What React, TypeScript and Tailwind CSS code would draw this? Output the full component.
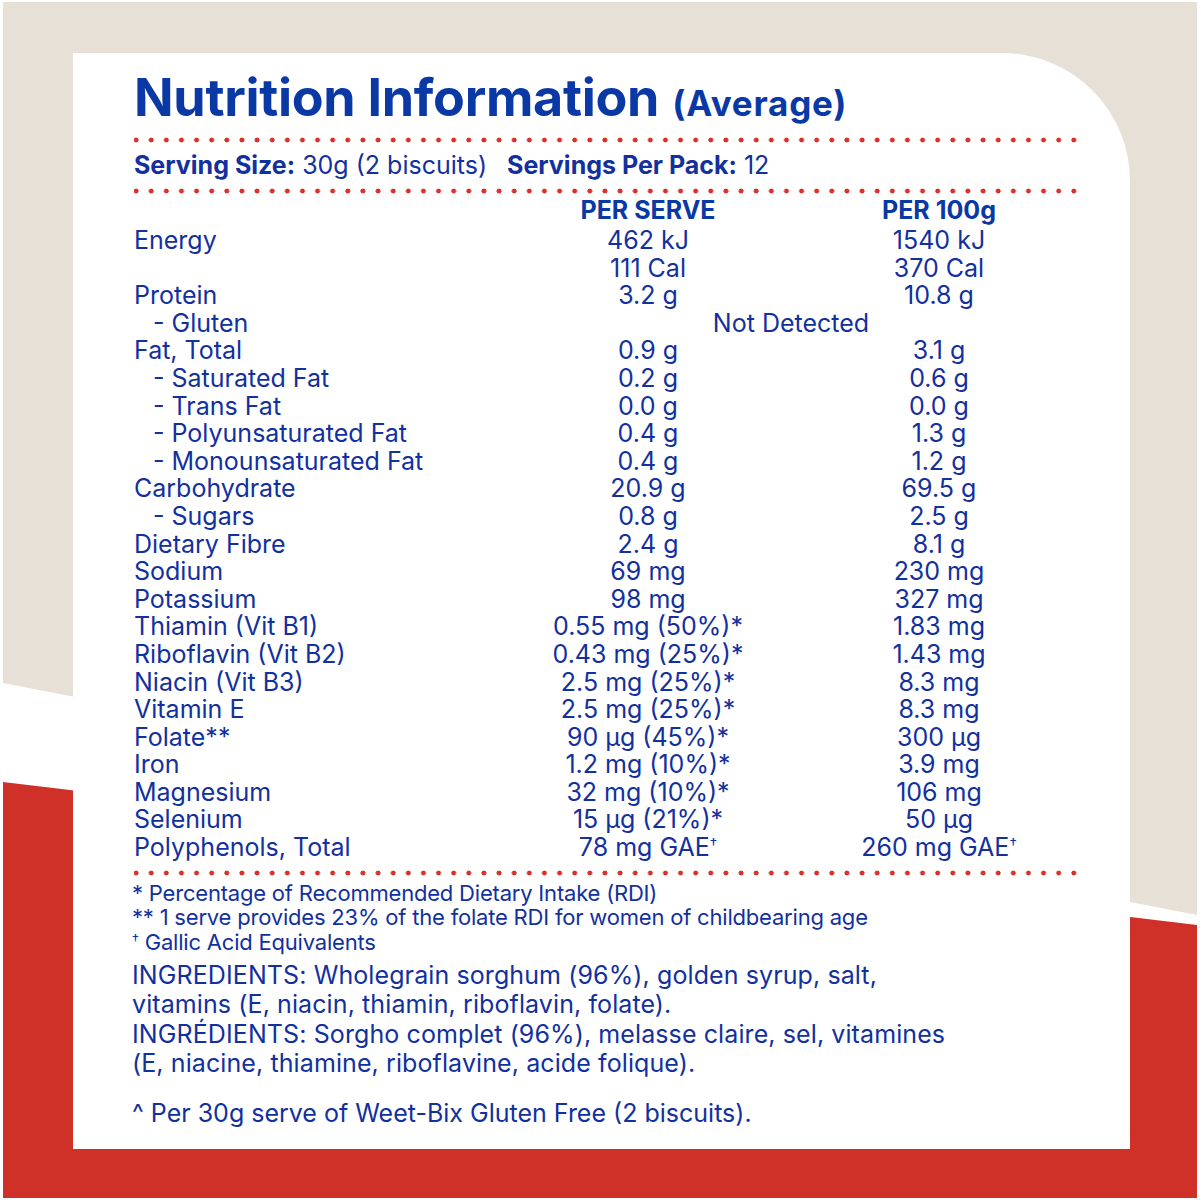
import React from "react";

type Row = { label: string; serve?: string; per100?: string; indent?: boolean; span?: string };

const rows: Row[] = [
  { label: "Energy", serve: "462 kJ", per100: "1540 kJ" },
  { label: "", serve: "111 Cal", per100: "370 Cal" },
  { label: "Protein", serve: "3.2 g", per100: "10.8 g" },
  { label: "- Gluten", indent: true, span: "Not Detected" },
  { label: "Fat, Total", serve: "0.9 g", per100: "3.1 g" },
  { label: "- Saturated Fat", indent: true, serve: "0.2 g", per100: "0.6 g" },
  { label: "- Trans Fat", indent: true, serve: "0.0 g", per100: "0.0 g" },
  { label: "- Polyunsaturated Fat", indent: true, serve: "0.4 g", per100: "1.3 g" },
  { label: "- Monounsaturated Fat", indent: true, serve: "0.4 g", per100: "1.2 g" },
  { label: "Carbohydrate", serve: "20.9 g", per100: "69.5 g" },
  { label: "- Sugars", indent: true, serve: "0.8 g", per100: "2.5 g" },
  { label: "Dietary Fibre", serve: "2.4 g", per100: "8.1 g" },
  { label: "Sodium", serve: "69 mg", per100: "230 mg" },
  { label: "Potassium", serve: "98 mg", per100: "327 mg" },
  { label: "Thiamin (Vit B1)", serve: "0.55 mg (50%)*", per100: "1.83 mg" },
  { label: "Riboflavin (Vit B2)", serve: "0.43 mg (25%)*", per100: "1.43 mg" },
  { label: "Niacin (Vit B3)", serve: "2.5 mg (25%)*", per100: "8.3 mg" },
  { label: "Vitamin E", serve: "2.5 mg (25%)*", per100: "8.3 mg" },
  { label: "Folate**", serve: "90 µg (45%)*", per100: "300 µg" },
  { label: "Iron", serve: "1.2 mg (10%)*", per100: "3.9 mg" },
  { label: "Magnesium", serve: "32 mg (10%)*", per100: "106 mg" },
  { label: "Selenium", serve: "15 µg (21%)*", per100: "50 µg" },
  { label: "Polyphenols, Total", serve: "78 mg GAE†", per100: "260 mg GAE†" },
];

// small raised dagger, kept out of the line box so rows don't grow
function Dagger() {
  return <span className="relative -top-[7px] text-[15px] leading-none">†</span>;
}

function Val({ text }: { text?: string }) {
  if (!text) return null;
  if (text.endsWith("†")) {
    return (
      <>
        {text.slice(0, -1)}
        <Dagger />
      </>
    );
  }
  return <>{text}</>;
}

function Dots() {
  return (
    <div className="h-[6px] w-[946px] bg-[radial-gradient(circle,#d9302a_2.2px,transparent_2.7px)] bg-[length:15.13px_6px] bg-[position:-5.5px_0] bg-repeat-x" />
  );
}

export default function App() {
  return (
    <div className="relative w-[1200px] h-[1200px] overflow-hidden bg-white font-['Inter','Liberation_Sans',sans-serif]">
      <svg className="absolute inset-0" width="1200" height="1200" viewBox="0 0 1200 1200">
        <polygon points="3,2 1197,2 1197,915 3,683" fill="#e7e0d6" />
        <polygon points="3,782 1197,925 1197,1198 3,1198" fill="#cf3128" />
      </svg>

      <div className="relative pt-[53px] pl-[73px]">
        <div className="w-[1057px] h-[1096px] bg-white rounded-tr-[128px] pl-[61px] pt-[13px] text-[#12309e]">
          <h1 className="flex items-baseline h-[64px] leading-[64px] font-bold text-[#0a39a6]">
            <span className="text-[52px] tracking-[-0.3px]">Nutrition Information</span>
            <span className="ml-[13px] text-[35px] tracking-[0.8px]">(Average)</span>
          </h1>

          <div className="mt-[7px]">
            <Dots />
          </div>

          <div className="mt-[8px] h-[28px] leading-[28px] text-[25px] flex">
            <span>
              <b>Serving Size:</b> 30g (2 biscuits)
            </span>
            <span className="ml-[20px]">
              <b>Servings Per Pack:</b> 12
            </span>
          </div>

          <div className="mt-[9px]">
            <Dots />
          </div>

          <div className="mt-[3px] grid grid-cols-[366px_296px_286px] text-[25px] leading-[27.6px]">
            <div className="h-[30px]" />
            <div className="h-[30px] text-center font-bold text-[#0a39a6]">PER SERVE</div>
            <div className="h-[30px] text-center font-bold text-[#0a39a6]">PER 100g</div>
            {rows.map((r, i) => (
              <React.Fragment key={i}>
                <div className={r.indent ? "pl-[19px]" : ""}>{r.label}</div>
                {r.span ? (
                  <div className="col-span-2 text-center">{r.span}</div>
                ) : (
                  <>
                    <div className="text-center h-[27.6px]">
                      <Val text={r.serve} />
                    </div>
                    <div className="text-center h-[27.6px]">
                      <Val text={r.per100} />
                    </div>
                  </>
                )}
              </React.Fragment>
            ))}
          </div>

          <div className="mt-[8px]">
            <Dots />
          </div>

          <div className="mt-[5px] -ml-[2px] text-[22px] leading-[24.5px] tracking-[-0.2px]">
            <p>* Percentage of Recommended Dietary Intake (RDI)</p>
            <p>** 1 serve provides 23% of the folate RDI for women of childbearing age</p>
            <p className="h-[24.5px]">
              <span className="relative -top-[5px] text-[14px] leading-none">†</span> Gallic Acid Equivalents
            </p>
          </div>

          <div className="mt-[7px] -ml-[2px] text-[25px] leading-[29.3px] tracking-[0.1px] w-[920px]">
            <p>
              INGREDIENTS: Wholegrain sorghum (96%), golden syrup, salt,
              <br />
              vitamins (E, niacin, thiamin, riboflavin, folate).
            </p>
            <p>
              INGRÉDIENTS: Sorgho complet (96%), melasse claire, sel, vitamines
              <br />
              (E, niacine, thiamine, riboflavine, acide folique).
            </p>
          </div>

          <p className="mt-[21px] -ml-[2px] text-[25px] leading-[29px]">^ Per 30g serve of Weet-Bix Gluten Free (2 biscuits).</p>
        </div>
      </div>
    </div>
  );
}
